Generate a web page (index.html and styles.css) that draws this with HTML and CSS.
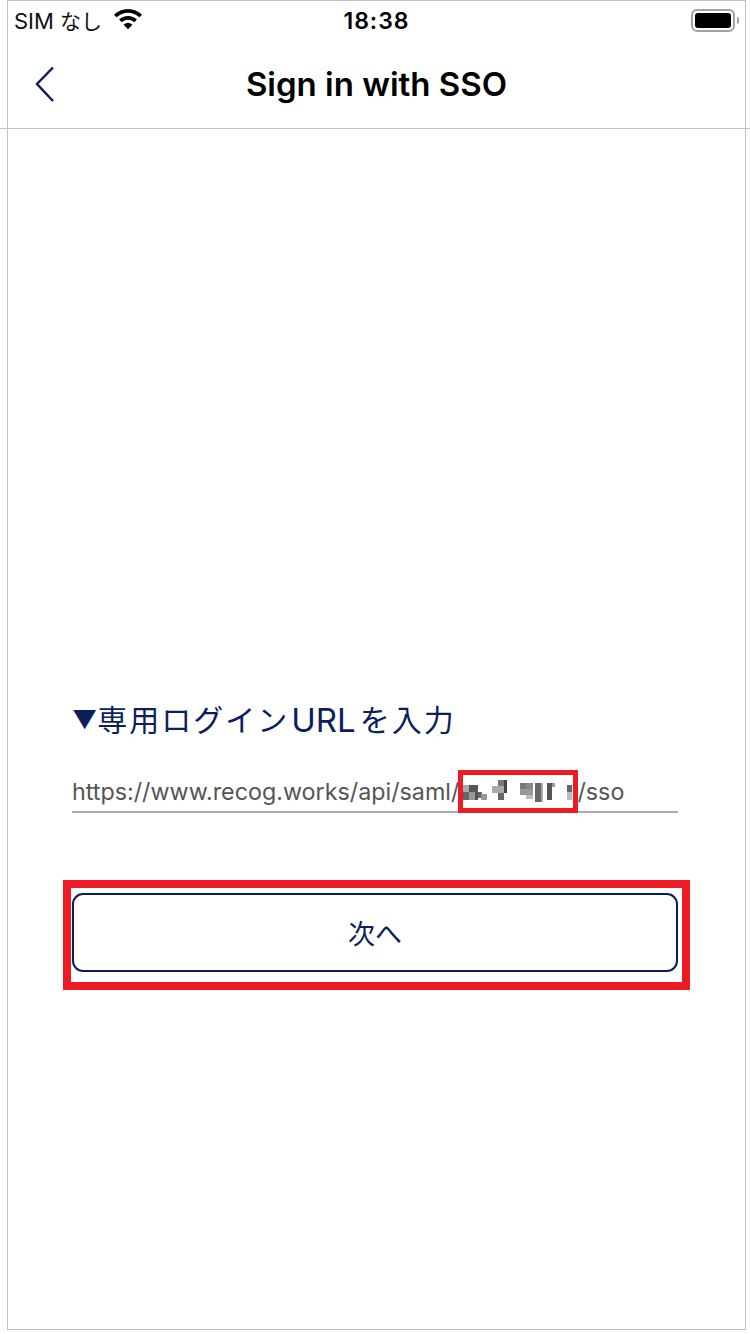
FILE: index.html
```html
<!DOCTYPE html>
<html lang="ja">
<head>
  <meta charset="UTF-8">
  <title>Sign in with SSO</title>
  <meta name="viewport" content="width=device-width, initial-scale=1.0">
  <link rel="stylesheet" href="styles.css">
</head>
<body>
  <div class="frame">
    <div class="status-bar">
      <div class="status-left">
        <span class="carrier">SIM<span class="carrier-jp">なし</span></span>
        <svg class="wifi" width="30" height="22" viewBox="0 0 30 22">
          <path d="M15 1C9.600 1 4.800 3.100 1 6.700L3.600 9.300C6.600 6.400 10.600 4.700 15 4.700s8.400 1.700 11.400 4.600L29 6.700C25.200 3.100 20.400 1 15 1z" fill="#000"/>
          <path d="M15 8.100c-3.400 0-6.500 1.300-8.900 3.500l2.600 2.600c1.700-1.500 3.900-2.400 6.300-2.400s4.600.9 6.300 2.400l2.600-2.600c-2.400-2.200-5.500-3.500-8.900-3.500z" fill="#000"/>
          <path d="M15 15.100c-1.700 0-3.200.6-4.400 1.700L15 21.300l4.400-4.500c-1.200-1.100-2.700-1.700-4.400-1.700z" fill="#000"/>
        </svg>
      </div>
      <div class="clock">18:38</div>
      <div class="status-right">
        <div class="battery"><div class="battery-level"></div></div>
        <div class="battery-cap"></div>
      </div>
    </div>

    <div class="nav-bar">
      <svg class="back" width="24" height="38" viewBox="0 0 24 38">
        <path d="M21 2.500L5 19 21 36" fill="none" stroke="#0b1f5b" stroke-width="2.500"/>
      </svg>
      <div class="nav-title">Sign in with SSO</div>
    </div>

    <div class="content">
      <div class="label"><span class="tri">▼</span><span class="label-jp">専用ログイン</span><span class="label-url">URL</span><span class="label-jp">を入力</span></div>
      <div class="url-field">
        <span>https://www.recog.works/api/saml/</span>
        <svg class="mosaic" width="110" height="26" viewBox="0 0 110 26">
          <rect x="0" y="7" width="6" height="7" fill="#aaa"/>
          <rect x="6" y="7" width="6" height="7" fill="#555"/>
          <rect x="0" y="14" width="6" height="8" fill="#666"/>
          <rect x="6" y="14" width="6" height="8" fill="#999"/>
          <rect x="12" y="7" width="3" height="15" fill="#555"/>
          <rect x="15" y="14" width="4" height="6" fill="#666"/>
          <rect x="18" y="16" width="6" height="6" fill="#999"/>
          <rect x="35" y="2" width="6" height="6" fill="#777"/>
          <rect x="41" y="2" width="3" height="13" fill="#444"/>
          <rect x="29" y="8" width="12" height="7" fill="#aaa"/>
          <rect x="35" y="15" width="6" height="7" fill="#666"/>
          <rect x="57" y="5" width="6" height="6" fill="#777"/>
          <rect x="63" y="5" width="7" height="6" fill="#888"/>
          <rect x="57" y="11" width="13" height="6" fill="#999"/>
          <rect x="63" y="17" width="7" height="4" fill="#bbb"/>
          <rect x="72" y="5" width="6" height="19" fill="#666"/>
          <rect x="78" y="5" width="2" height="19" fill="#aaa"/>
          <rect x="84" y="5" width="5" height="17" fill="#555"/>
          <rect x="89" y="5" width="3" height="4" fill="#999"/>
          <rect x="104" y="7" width="5" height="7" fill="#666"/>
          <rect x="104" y="14" width="5" height="8" fill="#bbb"/>
        </svg>
        <span>/sso</span>
        <div class="mark mark-url"></div>
      </div>
      <div class="button-wrap">
        <button class="next-btn">次へ</button>
        <div class="mark mark-btn"></div>
      </div>
    </div>
  </div>
  <div class="nav-rule"></div>
</body>
</html>
```

FILE: styles.css
```css
* { box-sizing: border-box; margin: 0; padding: 0; }

body {
  background: #fff;
  position: relative;
  height: 1334px;
  overflow: hidden;
  font-family: 'Inter', 'Noto Sans CJK JP', sans-serif;
}

.frame {
  width: 739px;
  height: 1330px;
  margin-left: 7px;
  border: 1px solid #c2c2c2;
  display: flex;
  flex-direction: column;
}

.status-bar {
  height: 40px;
  display: flex;
  align-items: center;
  justify-content: space-between;
  padding: 0 6px 2px 6px;
  position: relative;
}

.status-left {
  display: flex;
  align-items: center;
  gap: 11px;
}

.carrier {
  font-size: 22px;
  color: #111;
}

.carrier-jp {
  margin-left: 6px;
  font-size: 21px;
}

.wifi { margin-top: -3px; }

.clock {
  position: absolute;
  left: 0;
  right: 0;
  padding-top: 1px;
  text-align: center;
  font-size: 23px;
  font-weight: 600;
  color: #000;
  letter-spacing: 1px;
}

.status-right {
  display: flex;
  align-items: center;
  gap: 2px;
}

.battery {
  width: 44px;
  height: 23px;
  border: 2px solid #a3a3a3;
  border-radius: 6px;
  padding: 2px;
}

.battery-level {
  height: 100%;
  background: #000;
  border-radius: 3px;
}

.battery-cap {
  width: 2px;
  height: 7px;
  background: #a3a3a3;
  border-radius: 0 2px 2px 0;
}

.nav-bar {
  height: 87px;
  display: flex;
  align-items: center;
  justify-content: center;
  position: relative;
  padding-bottom: 2px;
}

.back {
  position: absolute;
  left: 24px;
  top: 24px;
}

.nav-title {
  font-size: 33px;
  font-weight: 600;
  color: #000;
}

.nav-rule {
  position: absolute;
  left: 0;
  right: 0;
  top: 128px;
  height: 1px;
  background: #c2c2c2;
}

.content {
  flex: 1;
  padding: 572px 67px 0 64px;
}

.label {
  display: flex;
  align-items: center;
  font-size: 30px;
  line-height: 40px;
  color: #0b1f5b;
  white-space: nowrap;
}

.tri {
  font-size: 25px;
}

.label-jp {
  letter-spacing: 2px;
}

.label-url {
  font-size: 33px;
  margin: 0 4px 0 2px;
}

.url-field {
  position: relative;
  display: flex;
  align-items: center;
  margin-top: 36px;
  height: 37px;
  border-bottom: 2px solid #aaa;
  padding-bottom: 5px;
  font-size: 23.3px;
  color: #555;
  white-space: nowrap;
}

.mosaic {
  flex: none;
  margin: 0 4px 0 4px;
}

.mark {
  position: absolute;
  pointer-events: none;
}

.mark-url {
  left: 386px;
  top: -6px;
  width: 120px;
  height: 43px;
  border: 5px solid #ed1c24;
}

.button-wrap {
  position: relative;
  margin-top: 80px;
}

.next-btn {
  display: block;
  width: 100%;
  height: 79px;
  background: #fff;
  border: 2px solid #0b1f5b;
  border-radius: 11px;
  color: #0b1f5b;
  font-family: inherit;
  font-size: 27px;
}

.mark-btn {
  left: -9px;
  right: -12px;
  top: -13px;
  bottom: -18px;
  border: 8px solid #ed1c24;
}
```
